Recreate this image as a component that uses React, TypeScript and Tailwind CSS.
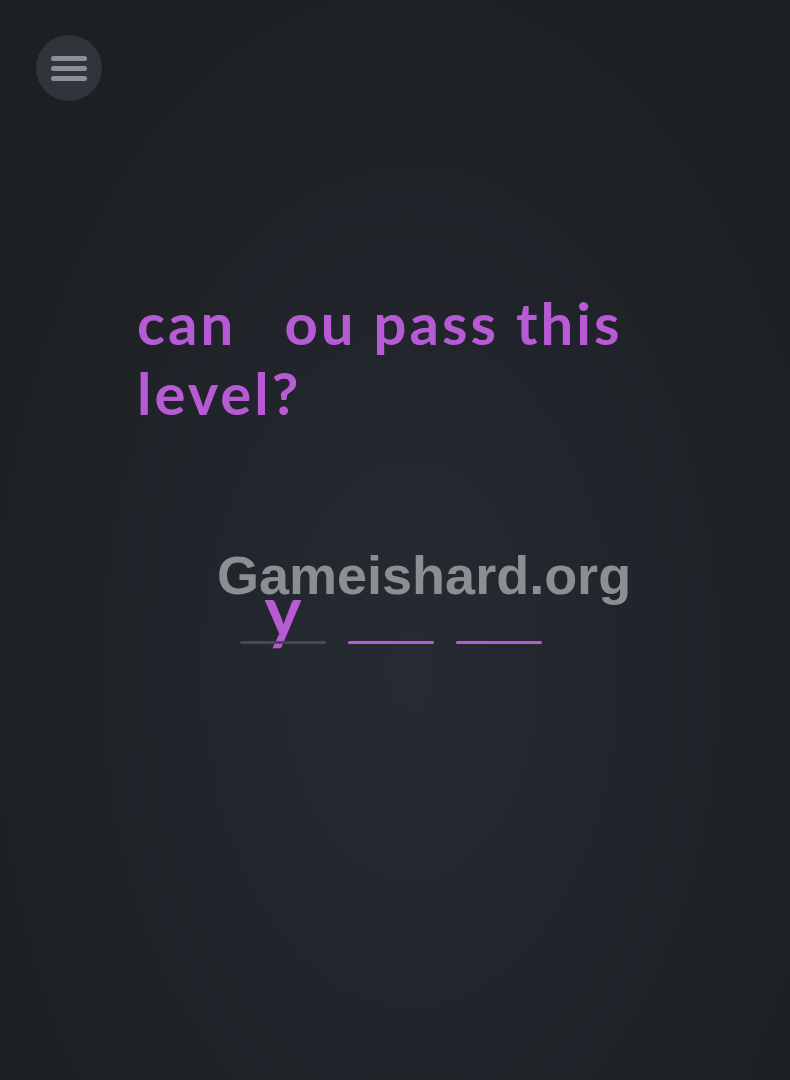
import React from 'react'

function MenuButton() {
  return (
    <button
      type="button"
      className="flex h-[66px] w-[66px] flex-col items-center justify-center gap-[5px] rounded-full bg-[#30343b]"
    >
      <span className="h-[5px] w-[36px] rounded-full bg-[#8b9096]" />
      <span className="h-[5px] w-[36px] rounded-full bg-[#8b9096]" />
      <span className="h-[5px] w-[36px] rounded-full bg-[#8b9096]" />
    </button>
  )
}

function Blank({ letter, active }: { letter?: string; active?: boolean }) {
  return (
    <div className="flex h-[60px] w-[86px] flex-col items-center justify-end">
      <span className="mb-[7px] text-[70px] font-bold leading-[50px] text-[#b65bd3]">
        {letter ?? '\u00a0'}
      </span>
      <div className={`h-[3px] w-full rounded-full ${active ? 'bg-[#b65bd3]' : 'bg-[#4a4659]'}`} />
    </div>
  )
}

export default function App() {
  return (
    <div
      className="relative h-[1080px] w-[790px] overflow-hidden bg-[#1c1f24]"
      style={{ fontFamily: 'Lato, "Noto Sans", sans-serif' }}
    >
      <div className="absolute inset-0 bg-[radial-gradient(ellipse_at_52%_62%,#262b32_0%,#21252b_40%,#1c1f23_80%)]" />

      <div className="relative flex flex-col pl-[36px] pt-[35px]">
        <MenuButton />

        <h1 className="ml-[101px] mt-[187px] w-[540px] text-[58px] font-bold leading-[70px] tracking-[3px] text-[#b65bd3]">
          can <span className="opacity-0">y</span>ou pass this level?
        </h1>

        <div className="ml-[204px] mt-[156px] flex gap-[22px]">
          <Blank letter="y" />
          <Blank active />
          <Blank active />
        </div>
      </div>

      {/* watermark overlay */}
      <div
        className="absolute left-[217px] top-[535px] text-[54px] font-bold text-[#8b8e92]"
        style={{ fontFamily: '"Liberation Sans", Arial, sans-serif' }}
      >
        Gameishard.org
      </div>
    </div>
  )
}
